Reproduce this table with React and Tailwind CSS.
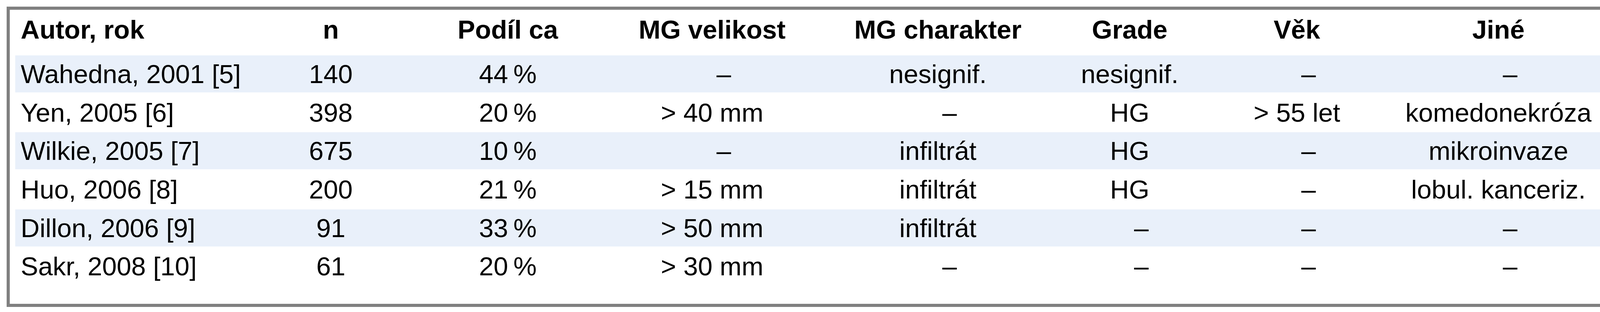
import React from "react";

const cols = "grid grid-cols-[582px_452px_454px_592px_564px_418px_438px_581px] items-center";

const headers = ["Autor, rok", "n", "Podíl ca", "MG velikost", "MG charakter", "Grade", "Věk", "Jiné"];

// "–" stands for an empty cell
const rows = [
  ["Wahedna, 2001 [5]", "140", "44\u2009%", "–", "nesignif.", "nesignif.", "–", "–"],
  ["Yen, 2005 [6]", "398", "20\u2009%", "> 40 mm", "–", "HG", "> 55 let", "komedonekróza"],
  ["Wilkie, 2005 [7]", "675", "10\u2009%", "–", "infiltrát", "HG", "–", "mikroinvaze"],
  ["Huo, 2006 [8]", "200", "21\u2009%", "> 15 mm", "infiltrát", "HG", "–", "lobul. kanceriz."],
  ["Dillon, 2006 [9]", "91", "33\u2009%", "> 50 mm", "infiltrát", "–", "–", "–"],
  ["Sakr, 2008 [10]", "61", "20\u2009%", "> 30 mm", "–", "–", "–", "–"],
];

function Cell({ value, index }) {
  if (index === 0) {
    return <div className="pl-[14px] whitespace-nowrap">{value}</div>;
  }
  return (
    <div className={`text-center whitespace-nowrap ${index === 7 ? "pl-[13px]" : ""}`}>
      {value === "–" ? <span className="inline-block pl-[60px]">–</span> : value}
    </div>
  );
}

export default function App() {
  return (
    <div
      className="w-[4189px] h-[800px] bg-white pt-[17px] pl-[17px] text-black text-[67px] leading-none"
      style={{ fontFamily: '"Liberation Sans", Arial, sans-serif' }}
    >
      <div className="w-[4155px] h-[770px] border-[8px] border-[#808080] pl-[14px]">
        {/* Header */}
        <div className={`${cols} h-[100px] font-bold`}>
          {headers.map((h, i) => (
            <Cell key={h} value={h} index={i} />
          ))}
        </div>

        {/* Body */}
        <div className="mt-[17px] flex flex-col gap-[3.7px]">
          {rows.map((row, r) => (
            <div key={r} className={`${cols} h-[95px] ${r % 2 === 0 ? "bg-[#e9f0fa]" : ""}`}>
              {row.map((v, i) => (
                <Cell key={i} value={v} index={i} />
              ))}
            </div>
          ))}
        </div>
      </div>
    </div>
  );
}
